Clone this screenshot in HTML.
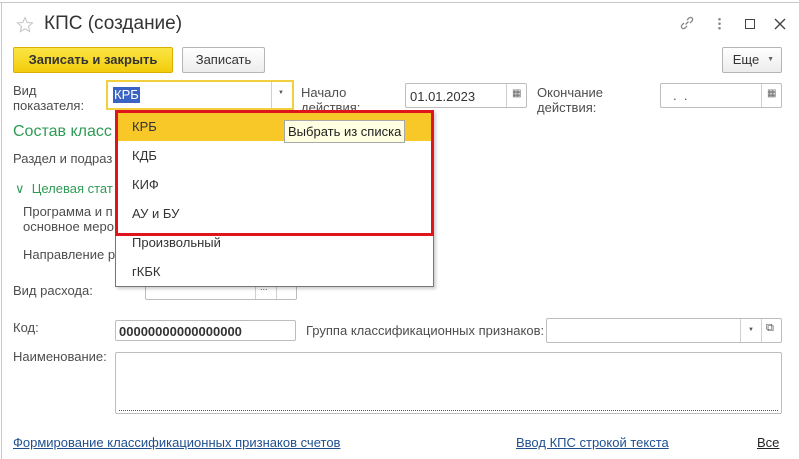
<!DOCTYPE html>
<html><head><meta charset="utf-8"><style>
*{box-sizing:border-box;margin:0;padding:0}
body{width:799px;height:459px;background:#fff;font-family:"Liberation Sans",Arial,sans-serif;font-size:13px;color:#4d4d4d;position:relative;overflow:hidden}
.a{position:absolute;white-space:nowrap}
.fld{position:absolute;border:1px solid #bdbdbd;border-radius:2px;background:#fff}
.btn{position:absolute;border:1px solid #b5b5b5;border-radius:2px;background:linear-gradient(#fff,#ececec);text-align:center;color:#333}
.sep{position:absolute;top:0;bottom:0;border-left:1px solid #cfcfcf}
.it{position:absolute;left:132px;font-size:13px;color:#333}
a{color:#1f4f8f;text-decoration:underline}
</style></head><body>
<div class="a" style="left:0;top:0;width:799px;height:3px;border-bottom:1px solid #c8c8c8"></div>
<div class="a" style="left:1px;top:3px;width:1px;height:456px;background:#c8c8c8"></div>
<svg class="a" style="left:16px;top:16px" width="18" height="18" viewBox="0 0 18 18"><path d="M9 1.5l2.2 5 5.3.4-4 3.5 1.2 5.2L9 12.8l-4.7 2.8 1.2-5.2-4-3.5 5.3-.4z" fill="none" stroke="#c4c4c4" stroke-width="1"/></svg>
<div class="a" style="left:44px;top:13px;font-size:19px;color:#333">КПС (создание)</div>
<svg class="a" style="left:678px;top:14px" width="18" height="18" viewBox="0 0 18 18" fill="none" stroke="#888" stroke-width="1.3"><path d="M7.5 10.5l3-3M6 9l-2 2a2.1 2.1 0 003 3l2-2M12 9l2-2a2.1 2.1 0 00-3-3l-2 2"/></svg>
<div class="a" style="left:718px;top:17px;width:3px;height:13px;background:radial-gradient(circle,#888 1.2px,transparent 1.4px) 0 0/3px 4.5px"></div>
<div class="a" style="left:745px;top:19px;width:10px;height:10px;border:1.5px solid #444"></div>
<svg class="a" style="left:774px;top:18px" width="12" height="12"><path d="M1 1L11 11M11 1L1 11" stroke="#444" stroke-width="1.4"/></svg>

<div class="btn" style="left:13px;top:47px;width:160px;height:26px;background:linear-gradient(#fbe543,#f2cc0c);border-color:#d8b100;font-weight:bold;line-height:24px;color:#333">Записать и закрыть</div>
<div class="btn" style="left:182px;top:47px;width:83px;height:26px;line-height:24px">Записать</div>
<div class="btn" style="left:722px;top:47px;width:60px;height:26px;line-height:24px;padding-right:12px">Еще<span style="position:absolute;right:7px;top:0;font-size:7px;color:#666">▼</span></div>

<div class="a" style="left:13px;top:83px;line-height:15px">Вид<br>показателя:</div>
<div class="fld" style="left:106px;top:80px;width:188px;height:30px;border:2px solid #f2d03d;border-radius:0">
<span class="a" style="left:5px;top:5px;background:#3a64c4;color:#fff;padding:0 1px;line-height:16px">КРБ</span>
<div class="sep" style="left:163px"></div><span class="a" style="left:170px;top:8px;font-size:6px;color:#555">▼</span></div>
<div class="a" style="left:301px;top:85px;line-height:15px">Начало<br>действия:</div>
<div class="fld" style="left:405px;top:83px;width:122px;height:25px"><span class="a" style="left:4px;top:5px;color:#333">01.01.2023</span><div class="sep" style="left:100px"></div><span class="a" style="left:106px;top:4px;font-size:10px;color:#666">▦</span></div>
<div class="a" style="left:537px;top:85px;line-height:15px">Окончание<br>действия:</div>
<div class="fld" style="left:660px;top:83px;width:122px;height:25px"><span class="a" style="left:12px;top:4px">.&nbsp;&nbsp;.</span><div class="sep" style="left:100px"></div><span class="a" style="left:106px;top:4px;font-size:10px;color:#666">▦</span></div>

<div class="a" style="left:13px;top:123px;font-size:16px;color:#2f9a55">Состав класс</div>
<div class="a" style="left:13px;top:151px">Раздел и подраз</div>
<div class="a" style="left:15px;top:181px;color:#2f9a55">∨&nbsp; Целевая стат</div>
<div class="a" style="left:23px;top:204px;line-height:15px">Программа и п<br>основное меро</div>
<div class="a" style="left:23px;top:247px">Направление р</div>
<div class="a" style="left:13px;top:283px">Вид расхода:</div>
<div class="fld" style="left:145px;top:277px;width:152px;height:23px"><div class="sep" style="left:109px"></div><div class="sep" style="left:130px"></div><span class="a" style="left:114px;top:4px;font-size:9px">...</span></div>

<div class="a" style="left:115px;top:110px;width:319px;height:177px;background:#fff;border:1px solid #777;box-shadow:2px 2px 3px rgba(0,0,0,.2)"></div>
<div class="a" style="left:115px;top:110px;width:319px;height:126px;border:3px solid #e0141c"></div>
<div class="a" style="left:118px;top:113px;width:313px;height:28px;background:#f8c829"></div>
<div class="it" style="top:119px">КРБ</div>
<div class="it" style="top:148px">КДБ</div>
<div class="it" style="top:177px">КИФ</div>
<div class="it" style="top:206px">АУ и БУ</div>
<div class="it" style="top:235px">Произвольный</div>
<div class="it" style="top:264px">гКБК</div>
<div class="a" style="left:284px;top:120px;width:121px;height:23px;background:#ffffe1;border:1px solid #a8a8a8;color:#222;line-height:21px;padding-left:3px">Выбрать из списка</div>

<div class="a" style="left:13px;top:320px">Код:</div>
<div class="fld" style="left:115px;top:320px;width:181px;height:21px"><span class="a" style="left:3px;top:3px;font-weight:bold;color:#333">00000000000000000</span></div>
<div class="a" style="left:306px;top:323px">Группа классификационных признаков:</div>
<div class="fld" style="left:546px;top:318px;width:236px;height:25px"><div class="sep" style="left:193px"></div><div class="sep" style="left:214px"></div><span class="a" style="left:201px;top:8px;font-size:6px;color:#555">▼</span><span class="a" style="left:219px;top:3px;font-size:11px">⧉</span></div>
<div class="a" style="left:13px;top:349px">Наименование:</div>
<div class="fld" style="left:115px;top:352px;width:667px;height:62px"><div class="a" style="left:3px;right:3px;bottom:2px;height:1px;background:repeating-linear-gradient(90deg,#d02020 0 1px,transparent 1px 2px)"></div></div>

<a class="a" style="left:13px;top:435px">Формирование классификационных признаков счетов</a>
<a class="a" style="left:516px;top:435px">Ввод КПС строкой текста</a>
<a class="a" style="left:757px;top:435px;color:#222">Все</a>
</body></html>
